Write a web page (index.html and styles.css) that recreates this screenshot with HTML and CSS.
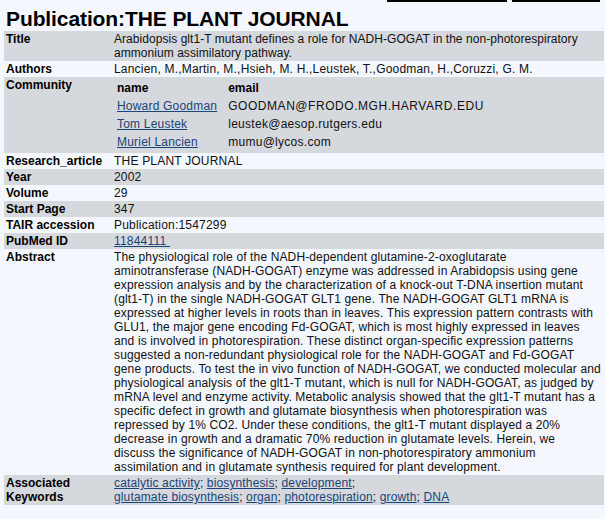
FILE: index.html
```html
<!DOCTYPE html>
<html>
<head>
<meta charset="utf-8">
<title>Publication:THE PLANT JOURNAL</title>
<link rel="stylesheet" href="styles.css">
</head>
<body>
<div class="topbar"><span class="bar bar-a"></span><span class="bar bar-b"></span></div>
<h1 class="heading">Publication:THE PLANT JOURNAL</h1>
<table class="detail">
  <tr class="shade">
    <th>Title</th>
    <td class="title-text">Arabidopsis glt1-T mutant defines a role for NADH-GOGAT in the non-photorespiratory ammonium assimilatory pathway.</td>
  </tr>
  <tr>
    <th>Authors</th>
    <td class="wide">Lancien, M.,Martin, M.,Hsieh, M. H.,Leustek, T.,Goodman, H.,Coruzzi, G. M.</td>
  </tr>
  <tr class="shade">
    <th>Community</th>
    <td>
      <table class="community">
        <tr><th class="c-name">name</th><th>email</th></tr>
        <tr><td class="c-name"><a href="#">Howard Goodman</a></td><td class="caps">GOODMAN@FRODO.MGH.HARVARD.EDU</td></tr>
        <tr><td class="c-name"><a href="#">Tom Leustek</a></td><td class="wide">leustek@aesop.rutgers.edu</td></tr>
        <tr><td class="c-name"><a href="#">Muriel Lancien</a></td><td class="wide">mumu@lycos.com</td></tr>
      </table>
    </td>
  </tr>
  <tr>
    <th>Research_article</th>
    <td>THE PLANT JOURNAL</td>
  </tr>
  <tr class="shade">
    <th>Year</th>
    <td>2002</td>
  </tr>
  <tr>
    <th>Volume</th>
    <td>29</td>
  </tr>
  <tr class="shade">
    <th>Start Page</th>
    <td>347</td>
  </tr>
  <tr>
    <th>TAIR accession</th>
    <td>Publication:1547299</td>
  </tr>
  <tr class="shade">
    <th>PubMed ID</th>
    <td><a href="#">11844111&nbsp;</a></td>
  </tr>
  <tr>
    <th>Abstract</th>
    <td class="abstract">The physiological role of the NADH-dependent glutamine-2-oxoglutarate<br>
aminotransferase (NADH-GOGAT) enzyme was addressed in Arabidopsis using gene<br>
expression analysis and by the characterization of a knock-out T-DNA insertion mutant<br>
(glt1-T) in the single NADH-GOGAT GLT1 gene. The NADH-GOGAT GLT1 mRNA is<br>
expressed at higher levels in roots than in leaves. This expression pattern contrasts with<br>
GLU1, the major gene encoding Fd-GOGAT, which is most highly expressed in leaves<br>
and is involved in photorespiration. These distinct organ-specific expression patterns<br>
suggested a non-redundant physiological role for the NADH-GOGAT and Fd-GOGAT<br>
gene products. To test the in vivo function of NADH-GOGAT, we conducted molecular and<br>
physiological analysis of the glt1-T mutant, which is null for NADH-GOGAT, as judged by<br>
mRNA level and enzyme activity. Metabolic analysis showed that the glt1-T mutant has a<br>
specific defect in growth and glutamate biosynthesis when photorespiration was<br>
repressed by 1% CO2. Under these conditions, the glt1-T mutant displayed a 20%<br>
decrease in growth and a dramatic 70% reduction in glutamate levels. Herein, we<br>
discuss the significance of NADH-GOGAT in non-photorespiratory ammonium<br>
assimilation and in glutamate synthesis required for plant development.</td>
  </tr>
  <tr class="shade">
    <th>Associated Keywords</th>
    <td class="kw"><a href="#">catalytic activity</a>; <a href="#">biosynthesis</a>; <a href="#">development</a>;<br><a href="#">glutamate biosynthesis</a>; <a href="#">organ</a>; <a href="#">photorespiration</a>; <a href="#">growth</a>; <a href="#">DNA</a></td>
  </tr>
</table>
</body>
</html>
```
FILE: styles.css
```css
html, body {
  margin: 0;
  padding: 0;
  background: #f4f7fd;
}
body {
  font-family: "Liberation Sans", Arial, sans-serif;
  font-size: 12px;
  color: #111;
  padding: 0 1px 0 4px;
  overflow: hidden;
}
.topbar {
  display: flex;
  justify-content: flex-end;
  gap: 5px;
  height: 2px;
  padding-right: 4px;
}
.bar {
  display: block;
  height: 2px;
  background: #000;
}
.bar-a { width: 120px; }
.bar-b { width: 88px; }
.heading {
  margin: 5px 0 0 2px;
  font-size: 21px;
  line-height: 24px;
  font-weight: bold;
  color: #000;
  letter-spacing: -0.1px;
}
.detail {
  width: 100%;
  border-collapse: collapse;
  margin-top: 0;
  table-layout: fixed;
}
.detail > tbody > tr > th,
.detail > tbody > tr > td {
  padding: 1px 2px;
  vertical-align: top;
  text-align: left;
  line-height: 14px;
}
.detail > tbody > tr > th {
  width: 104px;
  font-weight: bold;
  color: #000;
}
.detail > tbody > tr > td {
  padding-left: 2px;
  padding-right: 0;
  letter-spacing: 0.2px;
}
.detail > tbody > tr > td.abstract {
  white-space: nowrap;
  letter-spacing: 0.13px;
}
.detail > tbody > tr > td.title-text {
  letter-spacing: 0.05px;
}
.detail > tbody > tr > td.kw {
  letter-spacing: 0.14px;
}
.wide {
  letter-spacing: 0.28px;
}
.caps {
  letter-spacing: 0.55px;
}
.shade {
  background: #d5d8dd;
}
a {
  color: #1b4478;
}
.community {
  border-collapse: collapse;
  margin: 1px 0 1px 1px;
}
.community th,
.community td {
  padding: 2px;
  text-align: left;
  line-height: 14px;
  vertical-align: top;
}
.community th {
  font-weight: bold;
  color: #000;
  letter-spacing: 0;
}
.community .c-name {
  padding-right: 9px;
}
```
